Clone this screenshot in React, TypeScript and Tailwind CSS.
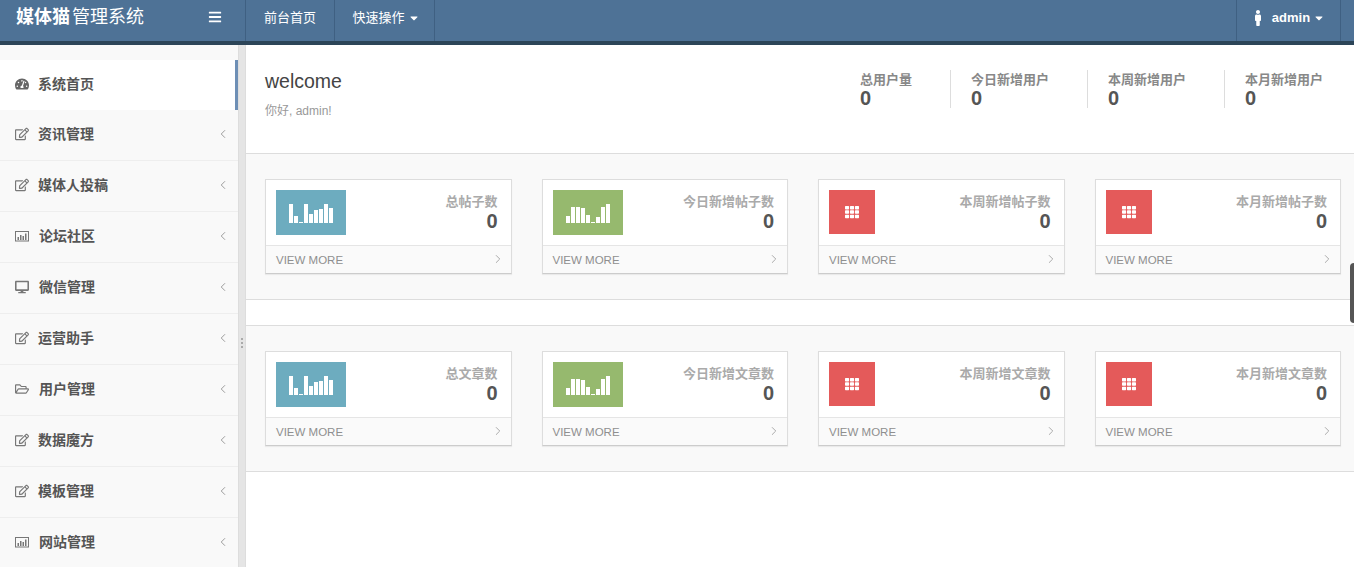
import React from "react";
import {
  FaBars,
  FaCaretDown,
  FaMale,
  FaTachometerAlt,
  FaRegEdit,
  FaDesktop,
  FaRegFolderOpen,
  FaTh,
} from "react-icons/fa";
import { ChevronLeft, ChevronRight } from "lucide-react";

function BoxChart({ className }: { className?: string }) {
  return (
    <svg className={className} width="14" height="14" viewBox="0 0 14 14" fill="none">
      <rect x="0.5" y="2.5" width="13" height="9.5" fill="none" stroke="currentColor" />
      <rect x="2.5" y="8" width="1.5" height="3" fill="currentColor" />
      <rect x="5" y="6" width="1.5" height="5" fill="currentColor" />
      <rect x="7.5" y="7" width="1.5" height="4" fill="currentColor" />
      <rect x="10" y="4.5" width="1.5" height="6.5" fill="currentColor" />
    </svg>
  );
}

const menu = [
  { icon: FaRegEdit, label: "资讯管理", wide: false },
  { icon: FaRegEdit, label: "媒体人投稿", wide: false },
  { icon: BoxChart, label: "论坛社区", wide: true },
  { icon: FaDesktop, label: "微信管理", wide: true },
  { icon: FaRegEdit, label: "运营助手", wide: false },
  { icon: FaRegFolderOpen, label: "用户管理", wide: true },
  { icon: FaRegEdit, label: "数据魔方", wide: false },
  { icon: FaRegEdit, label: "模板管理", wide: false },
  { icon: BoxChart, label: "网站管理", wide: true },
];

const stats = ["总用户量", "今日新增用户", "本周新增用户", "本月新增用户"];

const blue = [19, 7, 1, 19, 9, 13, 14, 19, 15];
const green = [7, 16, 16, 15, 8, 1, 6, 16, 19];

function Spark({ bars }: { bars: number[] }) {
  return (
    <svg width="44" height="20" viewBox="0 0 44 20" fill="#fff">
      {bars.map((h, i) => (
        <rect key={i} x={i * 5} y={20 - h} width="4" height={h} />
      ))}
    </svg>
  );
}

function Card({ kind, title }: { kind: "blue" | "green" | "red"; title: string }) {
  return (
    <div className="bg-white border border-[#dddddd] border-b-[#cccccc] shadow-[0_1px_1px_rgba(0,0,0,0.06)] h-[95px] flex flex-col">
      <div className="h-[65px] flex justify-between pl-[10px] pr-[13px] pt-[10px]">
        {kind === "red" ? (
          <div className="w-[46px] h-[44px] bg-[#e45a5a] flex items-center justify-center">
            <FaTh className="text-white text-[14px]" />
          </div>
        ) : (
          <div
            className={
              kind === "blue"
                ? "w-[70px] h-[45px] bg-[#6dacbf] flex items-center justify-center pt-[1px]"
                : "w-[70px] h-[45px] bg-[#96b96e] flex items-center justify-center pt-[1px]"
            }
          >
            <Spark bars={kind === "blue" ? blue : green} />
          </div>
        )}
        <div className="text-right">
          <div className="text-[13px] leading-[18px] font-bold text-[#aaaaaa] mt-[3px]">{title}</div>
          <div className="text-[20px] leading-[22px] font-bold text-[#555555] -mt-[1px]">0</div>
        </div>
      </div>
      <div className="flex-1 bg-[#fafafa] border-t border-[#e5e5e5] flex items-center justify-between pl-[10px] pr-[6px]">
        <span className="text-[11.5px] text-[#8f8f8f] pt-[2px]">VIEW MORE</span>
        <ChevronRight className="text-[#999999] -mt-[1px]" size={14} strokeWidth={1.4} />
      </div>
    </div>
  );
}

function Section({ word }: { word: string }) {
  return (
    <div className="bg-[#f9f9f9] border-b border-[#dddddd] pt-[25px] pb-[25px] pl-[19px] pr-[13px] grid grid-cols-4 gap-[30px]">
      <Card kind="blue" title={`总${word}数`} />
      <Card kind="green" title={`今日新增${word}数`} />
      <Card kind="red" title={`本周新增${word}数`} />
      <Card kind="red" title={`本月新增${word}数`} />
    </div>
  );
}

export default function App() {
  return (
    <div
      className="relative h-[567px] w-[1354px] overflow-hidden flex flex-col bg-white"
      style={{ fontFamily: '"Liberation Sans", "Noto Sans CJK SC", sans-serif' }}
    >
      <header className="h-[45px] shrink-0 bg-[#4e7296] border-b-4 border-[#2c4558] flex items-stretch text-white">
        <div className="w-[245px] flex items-center justify-between pl-[16px] pr-[23px] pb-[7px]">
          <div className="text-[18px] leading-[22px] whitespace-nowrap">
            <span className="font-bold">媒体猫</span>
            <span className="ml-[2px]">管理系统</span>
          </div>
          <FaBars className="text-[14px]" />
        </div>
        <nav className="flex items-stretch border-l border-[#3f6082] text-[13px]">
          <div className="w-[89px] flex items-center justify-center border-r border-[#3f6082] pb-[6px]">前台首页</div>
          <div className="w-[100px] flex items-center justify-center gap-[3px] pl-[3px] border-r border-[#3f6082] pb-[6px]">
            快速操作
            <FaCaretDown className="text-[12px]" />
          </div>
        </nav>
        <div className="flex-1" />
        <div className="w-[105px] flex items-center justify-center gap-[6px] pr-[2px] border-l border-r border-[#3f6082] text-[13px] font-bold pb-[6px]">
          <FaMale className="text-[16px]" />
          <span>admin</span>
          <FaCaretDown className="text-[12px] -ml-[3px]" />
        </div>
        <div className="w-[13px]" />
      </header>

      <div className="flex-1 flex min-h-0">
        <aside className="w-[238px] shrink-0 bg-[#f9f9f9] pt-[15px] overflow-hidden">
          <div className="h-[50px] bg-white border-r-[3px] border-[#6e8fb5] flex items-center pl-[15px] pb-[2px] text-[14px] font-bold text-[#555555]">
            <FaTachometerAlt className="w-[14px] text-[14px] text-[#666666]" />
            <span className="ml-[9px]">系统首页</span>
          </div>
          {menu.map((m) => (
            <div
              key={m.label}
              className="h-[51px] border-b border-[#eeeeee] flex items-center justify-between pl-[15px] pr-[8px] pb-[2px] text-[14px] font-bold text-[#555555]"
            >
              <div className="flex items-center">
                <m.icon className="w-[14px] text-[14px] text-[#777777]" />
                <span className={m.wide ? "ml-[10px]" : "ml-[9px]"}>{m.label}</span>
              </div>
              <ChevronLeft className="text-[#888888]" size={14} strokeWidth={1.4} />
            </div>
          ))}
        </aside>

        <div className="w-[8px] shrink-0 bg-[#e5e5e5] border-l border-r border-[#dddddd] flex items-center justify-center">
          <div className="flex flex-col gap-[2px] mt-[74px]">
            <span className="w-[2px] h-[2px] bg-[#aaaaaa]" />
            <span className="w-[2px] h-[2px] bg-[#aaaaaa]" />
            <span className="w-[2px] h-[2px] bg-[#aaaaaa]" />
          </div>
        </div>

        <main className="flex-1 min-w-0 flex flex-col">
          <div className="h-[109px] shrink-0 border-b border-[#dddddd] flex justify-between pl-[19px]">
            <div className="pt-[24px]">
              <div className="text-[19.5px] leading-[24px] text-[#444444]">welcome</div>
              <div className="text-[12px] leading-[16px] text-[#999999] mt-[10px]">你好, admin!</div>
            </div>
            <div className="flex items-start pt-[25px]">
              {stats.map((s, i) => (
                <div
                  key={s}
                  className={
                    i === 0
                      ? "h-[38px] pr-[38px]"
                      : i === 3
                      ? "h-[38px] pl-[20px] pr-[31px] border-l border-[#dddddd]"
                      : "h-[38px] pl-[20px] pr-[38px] border-l border-[#dddddd]"
                  }
                >
                  <div className="text-[13px] leading-[18px] font-bold text-[#888888] pt-[1px]">{s}</div>
                  <div className="text-[20px] leading-[20px] font-bold text-[#555555] -mt-[1px]">0</div>
                </div>
              ))}
            </div>
          </div>
          <Section word="帖子" />
          <div className="h-[26px] shrink-0 border-b border-[#dddddd]" />
          <Section word="文章" />
        </main>
      </div>

      <div className="absolute right-0 top-[263px] w-[4px] h-[60px] bg-[#555555] rounded-l-[4px]" />
    </div>
  );
}
